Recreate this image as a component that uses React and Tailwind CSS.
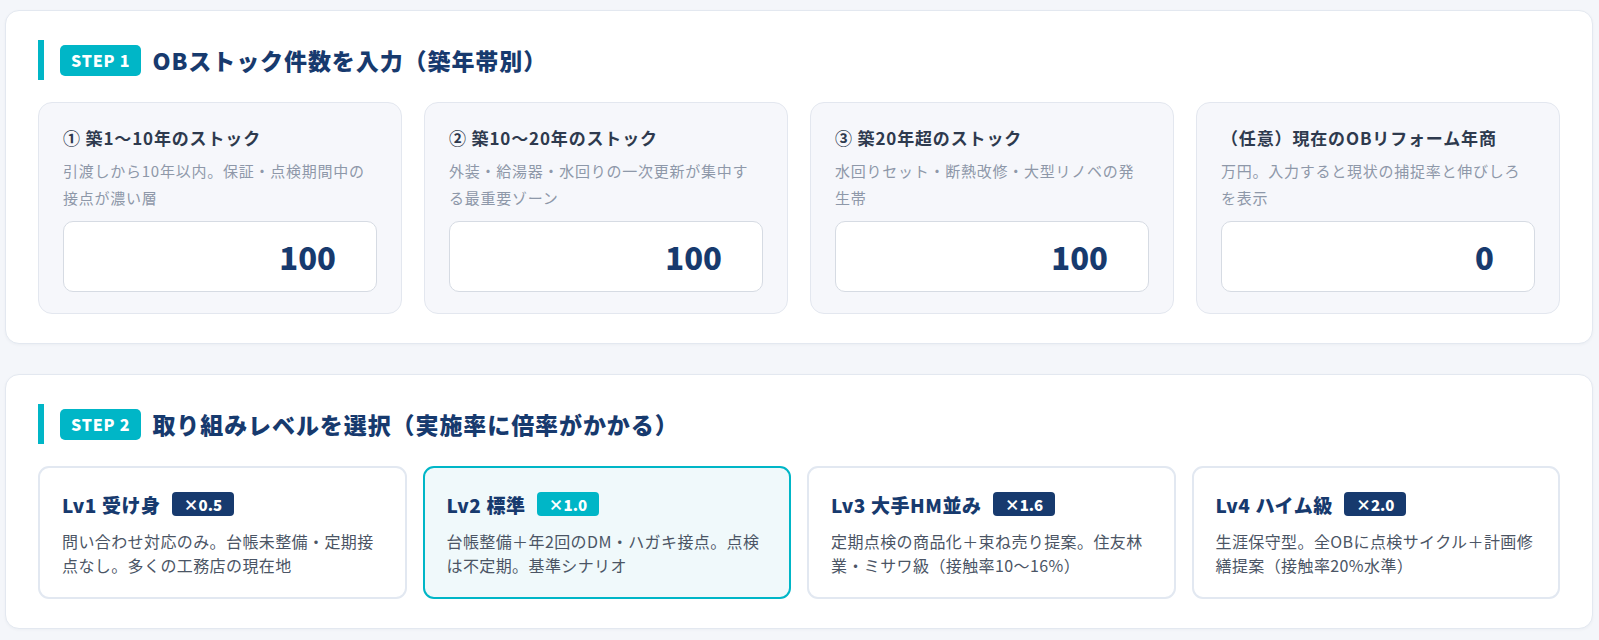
import React from "react";

const stocks = [
  { title: "① 築1～10年のストック", desc: "引渡しから10年以内。保証・点検期間中の接点が濃い層", value: "100" },
  { title: "② 築10～20年のストック", desc: "外装・給湯器・水回りの一次更新が集中する最重要ゾーン", value: "100" },
  { title: "③ 築20年超のストック", desc: "水回りセット・断熱改修・大型リノベの発生帯", value: "100" },
  { title: "（任意）現在のOBリフォーム年商", desc: "万円。入力すると現状の捕捉率と伸びしろを表示", value: "0" },
];

const levels = [
  { name: "Lv1 受け身", mult: "×0.5", desc: "問い合わせ対応のみ。台帳未整備・定期接点なし。多くの工務店の現在地" },
  { name: "Lv2 標準", mult: "×1.0", desc: "台帳整備＋年2回のDM・ハガキ接点。点検は不定期。基準シナリオ", active: true },
  { name: "Lv3 大手HM並み", mult: "×1.6", desc: "定期点検の商品化＋束ね売り提案。住友林業・ミサワ級（接触率10～16%）" },
  { name: "Lv4 ハイム級", mult: "×2.0", desc: "生涯保守型。全OBに点検サイクル＋計画修繕提案（接触率20%水準）" },
];

function StepHeading({ step, children }) {
  return (
    <div className="flex items-center h-[40px] border-l-[6px] border-[#00b6c7] pl-[16px] gap-[11px]">
      <span className="h-[31px] px-[11px] flex items-center rounded-[5px] bg-[#00b6c7] text-white text-[16px] font-black tracking-[0.05em] leading-none">
        STEP {step}
      </span>
      <h2 className="text-[23px] font-black text-[#173a6e] tracking-[0.04em] leading-none">{children}</h2>
    </div>
  );
}

function StockCard({ title, desc, value }) {
  return (
    <div className="bg-[#f6f7fb] border border-[#e3e7ef] rounded-[14px] px-[24px] pt-[23px] pb-[21px] flex flex-col">
      <div className="text-[17px] font-bold text-[#2e3a4e] leading-[24px] tracking-[0.05em]">{title}</div>
      <p className="mt-[7px] text-[15px] text-[#8e98a9] leading-[27px] tracking-[0.05em]">{desc}</p>
      <div className="mt-auto pt-[10px]">
        <div className="h-[71px] bg-white border border-[#d6dbe3] rounded-[10px] flex items-center justify-end pr-[40px]">
          <span className="text-[31px] font-black text-[#173a6e] leading-none">{value}</span>
        </div>
      </div>
    </div>
  );
}

function LevelCard({ name, mult, desc, active }) {
  return (
    <div
      className={
        active
          ? "rounded-[11px] border-2 border-[#00b6c7] bg-[#f0f9fb] px-[22px] pt-[22px] pb-[20px]"
          : "rounded-[11px] border-2 border-[#e2e8f1] bg-white px-[22px] pt-[22px] pb-[20px]"
      }
    >
      <div className="flex items-center h-[28px] gap-[11px]">
        <span className="text-[19px] font-black text-[#173a6e] tracking-[0.03em] leading-none">{name}</span>
        <span
          className={
            active
              ? "h-[24px] px-[12px] flex items-center rounded-[4px] bg-[#00b6c7] text-white text-[15px] font-black leading-none"
              : "h-[24px] px-[12px] flex items-center rounded-[4px] bg-[#173a6e] text-white text-[15px] font-black leading-none"
          }
        >
          {mult}
        </span>
      </div>
      <p className="mt-[11px] text-[16px] text-[#4b5565] leading-[24px] tracking-[0.025em]">{desc}</p>
    </div>
  );
}

export default function App() {
  return (
    <div
      className="min-h-[640px] bg-[#f4f6fa] pt-[10px] pl-[5px] pr-[6px] pb-[10px] flex flex-col gap-[30px]"
      style={{ fontFamily: '"Noto Sans CJK JP", "Noto Sans", sans-serif' }}
    >
      <section className="bg-white border border-[#e3e8f0] rounded-[14px] shadow-[0_1px_3px_rgba(20,40,80,0.04)] px-[32px] pt-[29px] pb-[29px]">
        <StepHeading step={1}>OBストック件数を入力（築年帯別）</StepHeading>
        <div className="mt-[22px] grid grid-cols-4 gap-[22px]">
          {stocks.map((s) => (
            <StockCard key={s.title} {...s} />
          ))}
        </div>
      </section>

      <section className="bg-white border border-[#e3e8f0] rounded-[14px] shadow-[0_1px_3px_rgba(20,40,80,0.04)] px-[32px] pt-[29px] pb-[29px]">
        <StepHeading step={2}>取り組みレベルを選択（実施率に倍率がかかる）</StepHeading>
        <div className="mt-[22px] grid grid-cols-4 gap-4">
          {levels.map((l) => (
            <LevelCard key={l.name} {...l} />
          ))}
        </div>
      </section>
    </div>
  );
}
